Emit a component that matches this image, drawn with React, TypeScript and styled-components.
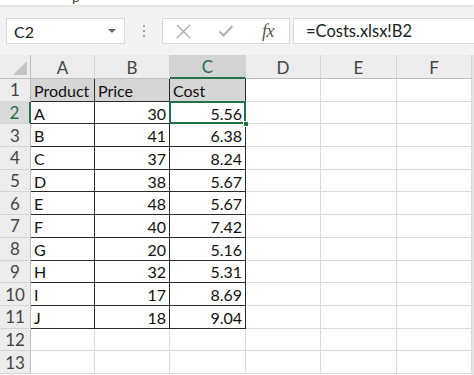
import React from "react";
import styled, { createGlobalStyle, css } from "styled-components";

const Global = createGlobalStyle`
  html, body { margin: 0; padding: 0; background: #ffffff; overflow: hidden; }
  * { box-sizing: border-box; }
`;

const FONT = `"Lato", "Open Sans", "Liberation Sans", sans-serif`;
const GREEN = "#217346";

const Page = styled.div`
  width: 474px;
  height: 375px;
  overflow: hidden;
  font-family: ${FONT};
  background: #ffffff;
  display: flex;
  flex-direction: column;
`;

const TopStrip = styled.div`
  height: 6px;
  flex: none;
  background: #ffffff;
  overflow: hidden;
  position: relative;
  border-bottom: 1px solid #e2e2e2;
  box-shadow: 0 1px 2px rgba(0, 0, 0, 0.06);
`;

const CutText = styled.span`
  position: absolute;
  left: 72px;
  top: -12px;
  font-size: 14px;
  color: #444;
`;

const Toolbar = styled.div`
  height: 49px;
  flex: none;
  background: #f3f3f3;
  display: flex;
  align-items: flex-start;
  padding: 12px 0 0 6px;
`;

const Box = styled.div`
  height: 26px;
  background: #ffffff;
  border: 1px solid #d9d9d9;
  display: flex;
  align-items: center;
`;

const NameBox = styled(Box)`
  width: 119px;
  padding: 0 8px 0 7px;
  justify-content: space-between;
  font-size: 16px;
  color: #222;
`;

const Caret = styled.span`
  width: 0;
  height: 0;
  border-left: 4px solid transparent;
  border-right: 4px solid transparent;
  border-top: 4px solid #666;
`;

const Dots = styled.div`
  width: 37px;
  height: 26px;
  display: flex;
  flex-direction: column;
  align-items: center;
  justify-content: center;
  gap: 3px;
`;

const Dot = styled.span`
  width: 2px;
  height: 2px;
  background: #a0a0a0;
`;

const FxButtons = styled(Box)`
  width: 128px;
  padding: 0 0 0 12px;
  gap: 0;
`;

const IconSlot = styled.span<{ $w: number }>`
  width: ${(p) => p.$w}px;
  display: flex;
  align-items: center;
  justify-content: center;
`;

const FxText = styled.span`
  font-family: "Liberation Serif", "DejaVu Serif", serif;
  font-style: italic;
  font-size: 18px;
  color: #555;
  letter-spacing: -0.5px;
`;

const FormulaBox = styled(Box)`
  flex: 1;
  margin-left: 3px;
  border-right: none;
  padding-left: 12px;
  font-size: 16.5px;
  color: #222;
`;

const SheetArea = styled.div`
  flex: 1;
  display: flex;
  overflow: hidden;
`;

const Grid = styled.div`
  display: grid;
  grid-template-columns: 31px 64px 75px 76px 75px 76px 75px;
  grid-template-rows: 24px repeat(13, 22.7px);
  width: 472px;
`;

const ScrollEdge = styled.div`
  width: 2px;
  background: #e4e4e4;
`;

const ColHead = styled.div<{ $sel?: boolean }>`
  background: ${(p) => (p.$sel ? "#d3d3d3" : "#ededed")};
  color: ${(p) => (p.$sel ? GREEN : "#444")};
  border-right: 1px solid #d4d4d4;
  border-bottom: ${(p) => (p.$sel ? `2px solid ${GREEN}` : "1px solid #bdbdbd")};
  font-size: 17px;
  display: flex;
  align-items: center;
  justify-content: center;
  padding-top: 1px;
`;

const Corner = styled.div`
  background: #ededed;
  border-right: 1px solid #bdbdbd;
  border-bottom: 1px solid #bdbdbd;
  position: relative;
`;

const Triangle = styled.span`
  position: absolute;
  right: 3px;
  bottom: 3px;
  width: 0;
  height: 0;
  border-left: 14px solid transparent;
  border-bottom: 14px solid #c4c4c4;
`;

const RowHead = styled.div<{ $sel?: boolean }>`
  background: ${(p) => (p.$sel ? "#dadada" : "#ededed")};
  color: ${(p) => (p.$sel ? GREEN : "#444")};
  border-bottom: 1px solid #d4d4d4;
  border-right: ${(p) => (p.$sel ? `2px solid ${GREEN}` : "1px solid #bdbdbd")};
  font-size: 17px;
  display: flex;
  align-items: center;
  justify-content: center;
`;

const Cell = styled.div<{
  $data?: boolean;
  $head?: boolean;
  $num?: boolean;
  $sel?: boolean;
}>`
  position: relative;
  font-size: 16px;
  color: #111;
  background: ${(p) => (p.$head ? "#d6d6d6" : "#ffffff")};
  border-right: 1px solid ${(p) => (p.$data ? "#2a2a2a" : "#dadada")};
  border-bottom: 1px solid ${(p) => (p.$data ? "#2a2a2a" : "#dadada")};
  display: flex;
  align-items: center;
  justify-content: ${(p) => (p.$num ? "flex-end" : "flex-start")};
  padding: 1px 3px 0 3px;
  white-space: nowrap;
  ${(p) =>
    p.$sel &&
    css`
      &::after {
        content: "";
        position: absolute;
        left: -1px;
        top: -1px;
        right: -1px;
        bottom: -1px;
        border: 2px solid ${GREEN};
        pointer-events: none;
      }
    `}
`;

const FillHandle = styled.span`
  position: absolute;
  right: -4px;
  bottom: -4px;
  width: 6px;
  height: 6px;
  background: ${GREEN};
  border: 1px solid #ffffff;
  z-index: 2;
`;

const CloseIcon = () => (
  <svg width="15" height="15" viewBox="0 0 15 15">
    <path d="M1 1 L14 14 M14 1 L1 14" stroke="#a8a8a8" strokeWidth="1.3" fill="none" />
  </svg>
);

const CheckIcon = () => (
  <svg width="16" height="14" viewBox="0 0 16 14">
    <path d="M1.5 7.5 L5.5 11.5 L14.5 2" stroke="#b0b0b0" strokeWidth="2" fill="none" />
  </svg>
);

const rows: [string, number, string][] = [
  ["A", 30, "5.56"],
  ["B", 41, "6.38"],
  ["C", 37, "8.24"],
  ["D", 38, "5.67"],
  ["E", 48, "5.67"],
  ["F", 40, "7.42"],
  ["G", 20, "5.16"],
  ["H", 32, "5.31"],
  ["I", 17, "8.69"],
  ["J", 18, "9.04"],
];

const cols = ["A", "B", "C", "D", "E", "F"];

export default function App() {
  const cells: React.ReactNode[] = [];
  cells.push(
    <Corner key="corner">
      <Triangle />
    </Corner>
  );
  cols.forEach((c) =>
    cells.push(
      <ColHead key={`h${c}`} $sel={c === "C"}>
        {c}
      </ColHead>
    )
  );
  for (let r = 1; r <= 13; r++) {
    cells.push(
      <RowHead key={`r${r}`} $sel={r === 2}>
        {r}
      </RowHead>
    );
    if (r === 1) {
      cells.push(<Cell key="1A" $data $head>Product</Cell>);
      cells.push(<Cell key="1B" $data $head>Price</Cell>);
      cells.push(<Cell key="1C" $data $head>Cost</Cell>);
    } else if (r <= 11) {
      const [p, price, cost] = rows[r - 2];
      cells.push(<Cell key={`${r}A`} $data>{p}</Cell>);
      cells.push(<Cell key={`${r}B`} $data $num>{price}</Cell>);
      cells.push(
        <Cell key={`${r}C`} $data $num $sel={r === 2}>
          {cost}
          {r === 2 && <FillHandle />}
        </Cell>
      );
    } else {
      cells.push(<Cell key={`${r}A`} />);
      cells.push(<Cell key={`${r}B`} />);
      cells.push(<Cell key={`${r}C`} />);
    }
    cells.push(<Cell key={`${r}D`} />);
    cells.push(<Cell key={`${r}E`} />);
    cells.push(<Cell key={`${r}F`} />);
  }

  return (
    <>
      <Global />
      <Page>
        <TopStrip>
          <CutText>p</CutText>
        </TopStrip>
        <Toolbar>
          <NameBox>
            <span>C2</span>
            <Caret />
          </NameBox>
          <Dots>
            <Dot />
            <Dot />
            <Dot />
          </Dots>
          <FxButtons>
            <IconSlot $w={16}>
              <CloseIcon />
            </IconSlot>
            <IconSlot $w={70}>
              <CheckIcon />
            </IconSlot>
            <IconSlot $w={14}>
              <FxText>fx</FxText>
            </IconSlot>
          </FxButtons>
          <FormulaBox>=Costs.xlsx!B2</FormulaBox>
        </Toolbar>
        <SheetArea>
          <Grid>{cells}</Grid>
          <ScrollEdge />
        </SheetArea>
      </Page>
    </>
  );
}
